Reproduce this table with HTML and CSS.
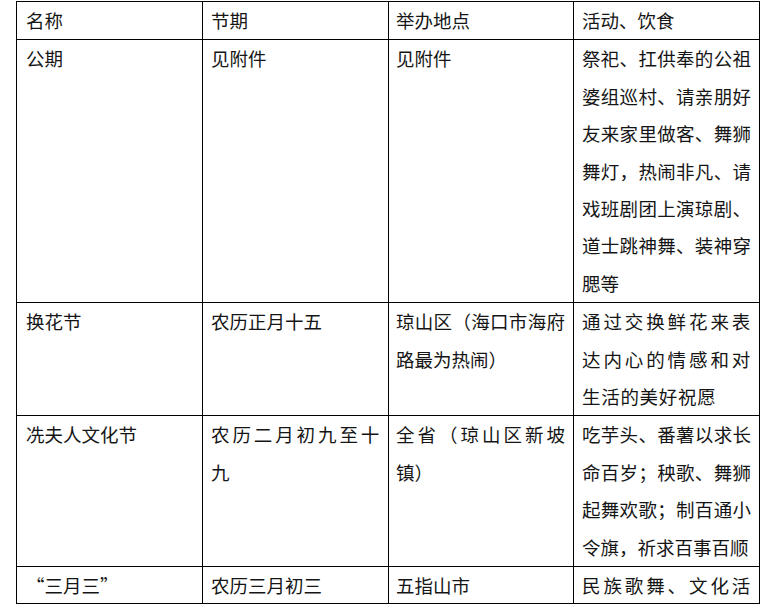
FILE: index.html
```html
<!DOCTYPE html>
<html lang="zh-CN">
<head>
<meta charset="utf-8">
<title>节日</title>
<link rel="stylesheet" href="styles.css">
</head>
<body>
<table class="tbl">
  <colgroup>
    <col class="c1"><col class="c2"><col class="c3"><col class="c4">
  </colgroup>
  <thead>
    <tr>
      <th class="k1">名称</th>
      <th class="k2">节期</th>
      <th class="k3">举办地点</th>
      <th class="k4">活动、饮食</th>
    </tr>
  </thead>
  <tbody>
    <tr>
      <td class="k1">公期</td>
      <td class="k2">见附件</td>
      <td class="k3">见附件</td>
      <td class="k4">祭祀、扛供奉的公祖婆组巡村、请亲朋好友来家里做客、舞狮舞灯，热闹非凡、请戏班剧团上演琼剧、道士跳神舞、装神穿腮等</td>
    </tr>
    <tr>
      <td class="k1">换花节</td>
      <td class="k2">农历正月十五</td>
      <td class="k3">琼山区（海口市海府路最为热闹）</td>
      <td class="k4 sp">通过交换鲜花来表达内心的情感和对生活的美好祝愿</td>
    </tr>
    <tr>
      <td class="k1">冼夫人文化节</td>
      <td class="k2 sp">农历二月初九至十九</td>
      <td class="k3">全省（琼山区新坡镇）</td>
      <td class="k4">吃芋头、番薯以求长命百岁；秧歌、舞狮起舞欢歌；制百通小令旗，祈求百事百顺</td>
    </tr>
    <tr class="last">
      <td class="k1">“三月三”</td>
      <td class="k2">农历三月初三</td>
      <td class="k3">五指山市</td>
      <td class="k4 sp full">民族歌舞、文化活</td>
    </tr>
  </tbody>
</table>
</body>
</html>
```

FILE: styles.css
```css
* {
  box-sizing: border-box;
}

body {
  margin: 0;
  background: #fff;
  font-family: "Noto Sans CJK SC", sans-serif;
  font-size: 18.5px;
  color: #151515;
}

.tbl {
  margin: 1px 0 0 16px;
  border-collapse: separate;
  border-spacing: 0;
  table-layout: fixed;
  width: 744px;
  border-left: 1px solid #000;
  border-top: 1px solid #000;
}

.c1, .c2, .c4 { width: 186px; }
.c3 { width: 185px; }

.tbl th,
.tbl td {
  border-right: 1px solid #000;
  border-bottom: 1px solid #000;
  padding: 0 8px 0 9px;
  vertical-align: top;
  text-align: justify;
  line-height: 37.4px;
  font-weight: normal;
}

.tbl th { text-align: left; }

.tbl .k1 { padding-left: 9px; }
.tbl .k2 { padding-left: 8px; }
.tbl .k3 { padding-left: 7px; }
.tbl .k4 { padding-left: 8px; }

.sp { letter-spacing: 0.7px; }

.tbl .last td {
  height: 37px;
  line-height: 36px;
}

.tbl .full {
  text-align-last: justify;
}
```
